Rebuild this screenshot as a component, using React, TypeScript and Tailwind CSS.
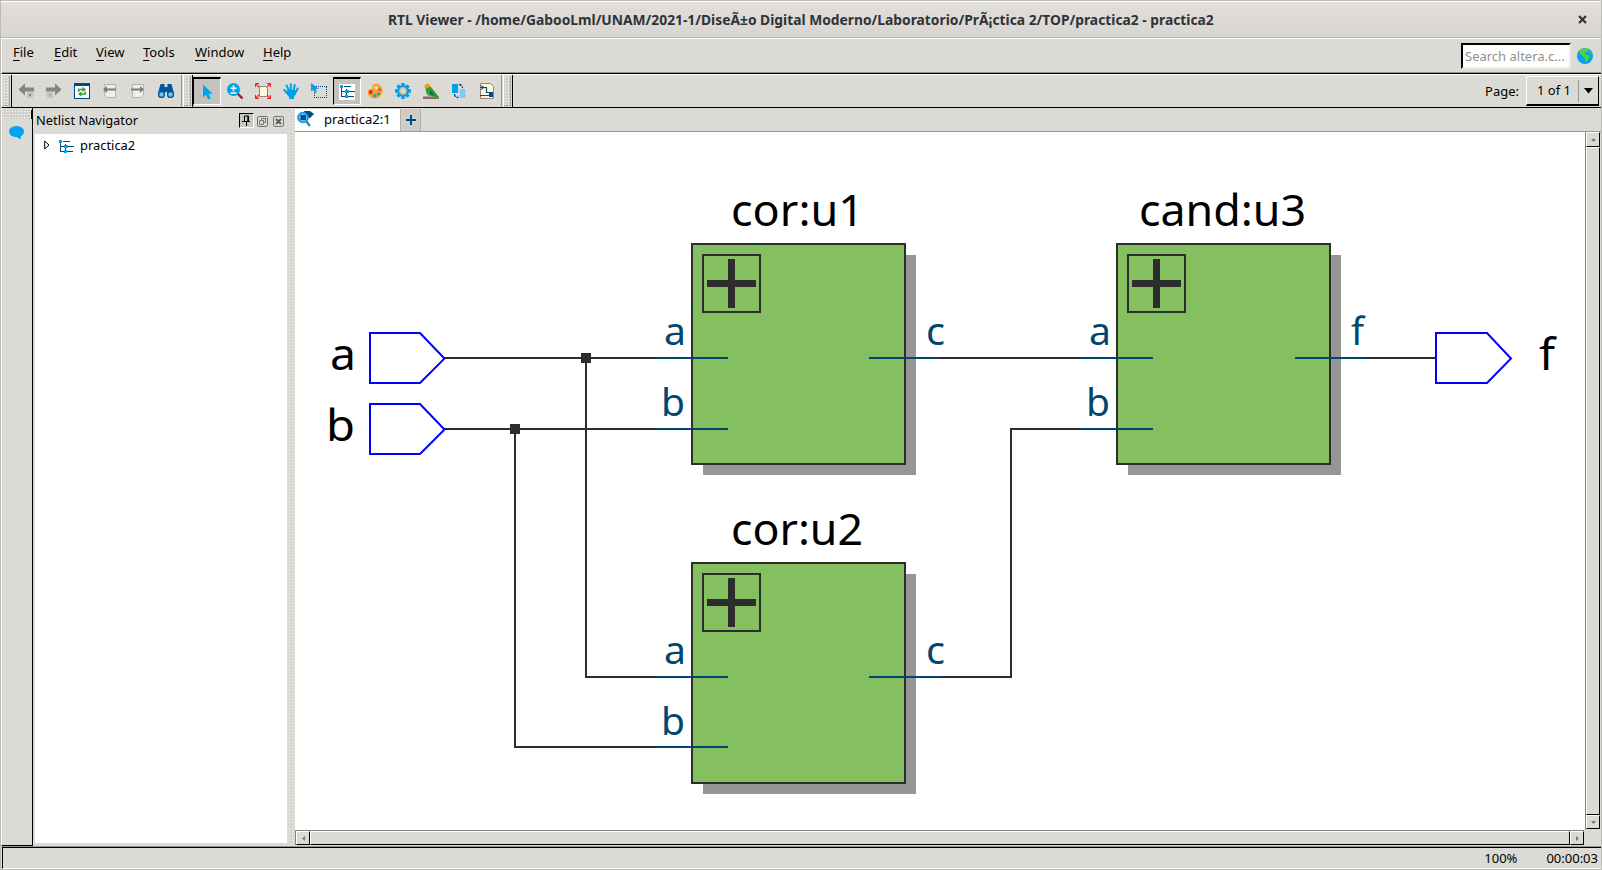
import React from "react";

const dots =
  "bg-[#d2d1cc] bg-[radial-gradient(#ffffff_0.9px,transparent_1px)] bg-[length:3px_3px]";

function Handle() {
  return (
    <div className="flex w-[9px] shrink-0 border-r border-black py-[1px]">
      <div className={`w-[7px] border-r border-b border-[#a9a8a3] ${dots}`} />
    </div>
  );
}

function ToolButton({ active, children }: { active?: boolean; children: React.ReactNode }) {
  return (
    <div
      className={
        active
          ? "flex h-7 w-7 items-center justify-center border border-t-2 border-l-black border-t-black border-r-white border-b-white bg-[#c4c2bd]"
          : "flex h-7 w-7 items-center justify-center"
      }
    >
      {children}
    </div>
  );
}

function Svg({ children, w = 16, h = 16 }: { children: React.ReactNode; w?: number; h?: number }) {
  return (
    <svg width={w} height={h} viewBox={`0 0 ${w} ${h}`} className="shrink-0">
      {children}
    </svg>
  );
}

const Back = () => (
  <Svg>
    <path d="M0.500 6.500 7 0.500v4H16v4h-9v4Z" fill="#868582" />
    <path d="M9 9h6v6H9z" fill="#c4c3be" />
    <path d="M11 11h2v2h-2z" fill="#868582" />
  </Svg>
);
const Forward = () => (
  <Svg>
    <path d="M15.500 6.500 9 0.500v4H0v4h9v4Z" fill="#868582" />
    <path d="M1 9h6v6H1z" fill="#c4c3be" />
    <path d="M3 11h2v2H3z" fill="#a9a8a4" />
  </Svg>
);
const Refresh = () => (
  <Svg>
    <path d="M0 0h16v16H0z" fill="#004a86" />
    <path d="M1 3h14v12H1z" fill="#fff" />
    <g fill="none" stroke="#3c9a2e" strokeWidth="1.500">
      <path d="M4.700 9V6.500H9M11.300 8.500V11H7" />
    </g>
    <path d="M8.500 3.700 12 6.500 8.500 9ZM7.500 8.500 4 11 7.500 13.800Z" fill="#3c9a2e" />
  </Svg>
);
const PagePrev = () => (
  <Svg>
    <path d="M3 1.500h10.500v13H5L2.500 12V1.500z" fill="#efeeea" stroke="#b4b3ae" />
    <path d="M1 6.500 5 3v2.500h9v2H5V10Z" fill="#7c7b78" />
  </Svg>
);
const PageNext = () => (
  <Svg>
    <path d="M2.500 1.500h11v10.500l-2.500 2.500H2.500z" fill="#efeeea" stroke="#b4b3ae" />
    <path d="M14 6.500 10 3v2.500H1v2h9V10Z" fill="#7c7b78" />
  </Svg>
);
const Binoculars = () => (
  <Svg>
    <path
      d="M2.500 1h4v3h3V1h4l2.500 9v3.500L14 15h-3.500L9 13V9H7v4l-1.500 2H2L0 13.500V10Z"
      fill="#005a9c"
    />
    <circle cx="3.500" cy="11.500" r="2.200" fill="#6fc6f2" />
    <circle cx="12.500" cy="11.500" r="2.200" fill="#6fc6f2" />
  </Svg>
);
const Pointer = () => (
  <Svg>
    <path d="M4 0.500v13l3-2.700 2.200 4.700 2.600-1.200-2.200-4.500h4Z" fill="#00a4f0" />
  </Svg>
);
const ZoomIcon = () => (
  <Svg>
    <path d="m10.500 10.500 5 5" stroke="#b01c1c" strokeWidth="2.400" />
    <circle cx="6.500" cy="6.500" r="6.500" fill="#00a0ea" />
    <path d="M3.500 5.200h6M6.500 2.200v6M3.500 10h6" stroke="#fff" strokeWidth="1.400" />
  </Svg>
);
const Fit = () => (
  <Svg>
    <path d="M4.500 3.500h6L12.500 5.500v8h-8z" fill="#fffadf" stroke="#9c8275" />
    <g stroke="#ee1c25" fill="none">
      <path d="m1 1 3 3M15 1l-3 3M1 15l3-3M15 15l-3-3" strokeWidth="1.200" />
      <path d="M.5 4V.5H4M12 .5h3.500V4M.5 12v3.500H4M12 15.500h3.500V12" />
    </g>
  </Svg>
);
const Hand = () => (
  <Svg>
    <g stroke="#00a0ea" strokeLinecap="round" fill="none" strokeWidth="2">
      <path d="M1.300 7 5 11M3.700 2.500 6 8M7.800 1.200V8M11.700 2 10.500 8M14.700 5.500 12 10.500" />
    </g>
    <path d="M4.500 7h8l.5 4-2 3v2H6v-2L3 10Z" fill="#00a0ea" />
  </Svg>
);
const AreaSelect = () => (
  <Svg>
    <path
      d="M3 3.500h13M3 14.500h13M3.500 4v11M15.500 4v11"
      fill="none"
      stroke="#004a86"
      strokeDasharray="1 1"
      shapeRendering="crispEdges"
    />
    <path d="M0 0v8.500l2-1.500 2 3 2-1-1.500-3H8Z" fill="#00a0ea" />
  </Svg>
);
const Tree = () => (
  <Svg>
    <path
      d="M2.500 3v10M2 7.500h4M2 12.500h4M5 2.500h7M9 7.500h7M9 12.500h6M7.500 5v6"
      fill="none"
      stroke="#004a86"
      shapeRendering="crispEdges"
    />
    <path d="M1 1h3v3H1zM6 6h4v3H6zM6 11h3v3H6z" fill="#00a0ea" />
  </Svg>
);
const Palette = () => (
  <Svg>
    <path
      fillRule="evenodd"
      d="M9 .8c4 0 6.500 3 6.500 6.600 0 4.500-3.500 8.100-7.500 8.100S.8 13 .8 9.500C.8 7 2 6 4 6c1.500 0 1.500-1 1.300-2C5 2 6.500.8 9 .8Zm0 2.200c-1.500 0-2 1-1.500 2.200C8 6.500 9 7 10 6.500c1.400-.7.700-3.500-1-3.500Z"
      fill="#ffa21e"
    />
    <circle cx="3.800" cy="9" r="1.900" fill="#ed1650" />
    <circle cx="7.800" cy="12.600" r="1.900" fill="#1aa7e8" />
    <circle cx="11.500" cy="10.800" r="1.600" fill="#3aa44a" />
    <circle cx="12.600" cy="6.800" r="1.300" fill="#96509f" />
  </Svg>
);
const Gear = () => (
  <Svg>
    <path
      d="M8 0v16M0 8h16M2.400 2.400l11.200 11.200M13.600 2.400 2.400 13.600"
      stroke="#009fe8"
      strokeWidth="3.400"
    />
    <circle cx="8" cy="8" r="6" fill="#009fe8" />
    <circle cx="8" cy="8" r="3.300" fill="#dcdad5" stroke="#c9ad82" strokeWidth="1.300" />
  </Svg>
);
const Bird = () => (
  <Svg>
    <path d="M0 13.500h16V16H0z" fill="#8d6c60" />
    <path d="M1 3 4.500 0 8 3l-.5 4H3Z" fill="#f79a1f" />
    <path d="M3 5 8 4l8 10h-4l-7-1.500Q2 9 3 5Z" fill="#2f9e3e" />
    <path d="M7 6.500 12 13 7 11Z" fill="#136b2c" />
  </Svg>
);
const Swap = () => (
  <Svg>
    <path d="M1 1h6v9H1z" fill="#00a0ea" />
    <path d="M9 6h5v9H9zM8 8h7v1.300H8zM8 12h7v1.300H8z" fill="#7ccdf5" />
    <path
      d="M8 1.500q3 0 3.500 3.500M3.500 11q0 3.500 4 3.500"
      fill="none"
      stroke="#004a86"
      strokeDasharray="3 1"
      strokeWidth="1.400"
    />
  </Svg>
);
const Schematic = () => (
  <Svg>
    <path d="M1.500.5h10l3 3v12h-13z" fill="#fff8dc" stroke="#9c8275" />
    <path d="M1 4.500h6.500v5H12M1 12.500h10" fill="none" stroke="#004a86" strokeWidth="1.200" />
    <path d="M2 2.500l3 2-3 2" fill="none" stroke="#004a86" />
    <path d="M10 9h4v5h-4z" fill="#004a86" />
  </Svg>
);

function Globe() {
  return (
    <Svg>
      <circle cx="8" cy="8" r="8" fill="#00a4f2" />
      <path d="M3 2.500Q6 0 10 .500l2 1.500-2 2-2 .5L7.500 6l4 1.500 1 2-3 4-1 1.500-.5-5L5 7.500 2.500 5Z" fill="#62d222" />
      <path d="M12 3 14 4.500l.5 2-2-1Z" fill="#62d222" />
    </Svg>
  );
}

function TabIcon() {
  return (
    <Svg w={17} h={17}>
      <path d="M7 1h6l4 3-4 4H9Z" fill="#004a86" />
      <path d="m9 11 4 5" stroke="#1a86c8" strokeWidth="2.200" />
      <circle cx="6" cy="7.500" r="5" fill="#64bfee" stroke="#1395dc" strokeWidth="1.600" />
      <path d="M3.500 5h5.500v5H3.500z" fill="#004a86" />
    </Svg>
  );
}

function MenuItem({ label, className }: { label: string; className: string }) {
  return (
    <span className={className}>
      <span className="underline decoration-1 underline-offset-[3px]">{label[0]}</span>
      {label.slice(1)}
    </span>
  );
}

function Label({
  x,
  y,
  w,
  size,
  fill,
  children,
}: {
  x: number;
  y: number;
  w: number;
  size: number;
  fill: string;
  children: string;
}) {
  return (
    <text x={x} y={y + 1} textLength={w} lengthAdjust="spacingAndGlyphs" fontSize={size} fill={fill}>
      {children}
    </text>
  );
}

function Block({ dx = 0, dy = 0 }: { dx?: number; dy?: number }) {
  return (
    <g transform={`translate(${dx} ${dy})`}>
      <path d="M703 255h213v220H703z" fill="#969696" />
      <path d="M692 244h213v220H692z" fill="#84c060" stroke="#2d2d2d" strokeWidth="2" />
      <path d="M703 255h57v57h-57z" fill="none" stroke="#2d2d2d" strokeWidth="2" />
      <path d="M707 280h49v7h-49zM728 259h7v49h-7z" fill="#2d2d2d" />
    </g>
  );
}

function Netlist() {
  const pin = "#00466e";
  return (
    <svg
      width="1290"
      height="698"
      viewBox="295 132 1290 698"
      className="block shrink-0 bg-white"
      fontFamily="'Noto Sans', sans-serif"
    >
      <Block />
      <Block dx={425} />
      <Block dy={319} />
      <g fill="none" stroke="#2d2d2d" strokeWidth="2">
        <path d="M444 358H658M444 429H658M586 358V677H658M515 429V747H658M939 358H1083M939 677H1011V429H1083M1364 358H1436" />
      </g>
      <path d="M581 353h10v10h-10zM510 424h10v10h-10z" fill="#2d2d2d" />
      <g stroke={pin} strokeWidth="2">
        <path d="M657 358h71M657 429h71M869 358h71M657 677h71M657 747h71M869 677h71M1082 358h71M1082 429h71M1295 358h70" />
      </g>
      <g fill="none" stroke="#0000ff" strokeWidth="2">
        <path d="M370 333h50l24.500 25.500L420 383h-50zM370 404h50l24.500 25.500L420 454h-50zM1436 333h51l24 25.500L1487 383h-51z" />
      </g>
      <Label x={731} y={225} w={133} size={44.500} fill="#000">cor:u1</Label>
      <Label x={731} y={544} w={132} size={44.500} fill="#000">cor:u2</Label>
      <Label x={1139} y={225} w={167} size={44.500} fill="#000">cand:u3</Label>
      <Label x={330} y={369} w={26} size={44.500} fill="#000">a</Label>
      <Label x={326} y={440} w={29} size={44.500} fill="#000">b</Label>
      <Label x={1539} y={369} w={16} size={44.500} fill="#000">f</Label>
      {[[0, 0, 0], [425, 0, 0], [0, 319, 319]].map(([dx, dy, dyb]) => (
        <React.Fragment key={`${dx}-${dy}`}>
          <Label x={664 + dx} y={344 + dy} w={22} size={38} fill={pin}>a</Label>
          <Label x={661 + dx} y={415 + dyb} w={24} size={38} fill={pin}>b</Label>
        </React.Fragment>
      ))}
      <Label x={926} y={344} w={19} size={38} fill={pin}>c</Label>
      <Label x={926} y={663} w={19} size={38} fill={pin}>c</Label>
      <Label x={1351} y={344} w={13} size={38} fill={pin}>f</Label>
    </svg>
  );
}

const bevel = "border border-t-white border-l-white border-r-black border-b-black bg-[#dcdad5]";

export default function App() {
  return (
    <div className="flex h-[870px] w-[1602px] flex-col overflow-hidden border border-[#bcbbb8] bg-[#dcdad5] font-['Noto_Sans',sans-serif] text-[13px] text-black">
      <header className="flex h-[37px] shrink-0 items-center border-t border-b border-t-white border-b-[#b6b3ae] bg-linear-to-b from-[#e1dedb] to-[#d9d5d1] pr-[14px] pl-[387px]">
        <h1 className="w-[827px] pt-[2px] text-[13.820px] font-bold whitespace-nowrap text-[#2e3436]">
          RTL Viewer - /home/GabooLml/UNAM/2021-1/DiseÃ±o Digital Moderno/Laboratorio/PrÃ¡ctica 2/TOP/practica2 - practica2
        </h1>
        <svg width="9" height="9" viewBox="0 0 9 9" className="ml-auto">
          <path d="m1 1 7 7M8 1 1 8" stroke="#2e3436" strokeWidth="2.200" />
        </svg>
      </header>

      <nav className="flex h-[36px] shrink-0 border-t border-b border-l border-t-white border-l-white border-b-black pt-[4px] pr-[8px] pl-[11px] shadow-[inset_0_-1px_0_#96948f]">
        <MenuItem label="File" className="w-[41px]" />
        <MenuItem label="Edit" className="w-[42px]" />
        <MenuItem label="View" className="w-[47px]" />
        <MenuItem label="Tools" className="w-[52px]" />
        <MenuItem label="Window" className="w-[68px]" />
        <MenuItem label="Help" className="" />
        <div className="mt-0 ml-auto flex h-[26px] w-[110px] items-center border-2 border-t-black border-r-[#eceae6] border-b-[#eceae6] border-l-black bg-white pt-px pl-[2px] whitespace-nowrap text-[#8f8f8f]">
          Search altera.c...
        </div>
        <div className="mt-[5px] ml-[6px]">
          <Globe />
        </div>
      </nav>

      <div className="flex h-[34px] shrink-0 border-t border-b border-l border-t-white border-b-black border-l-white pl-px">
        <Handle />
        <div className="flex w-[170px] items-center border-r border-[#96948f]">
          <ToolButton><Back /></ToolButton>
          <ToolButton><Forward /></ToolButton>
          <ToolButton><Refresh /></ToolButton>
          <ToolButton><PagePrev /></ToolButton>
          <ToolButton><PageNext /></ToolButton>
          <ToolButton><Binoculars /></ToolButton>
        </div>
        <div className="w-[2px] border-r border-white" />
        <Handle />
        <div className="flex w-[309px] items-center border-r border-[#96948f]">
          <ToolButton active><Pointer /></ToolButton>
          <ToolButton><ZoomIcon /></ToolButton>
          <ToolButton><Fit /></ToolButton>
          <ToolButton><Hand /></ToolButton>
          <ToolButton><AreaSelect /></ToolButton>
          <ToolButton active>
            <span className="bg-white"><Tree /></span>
          </ToolButton>
          <ToolButton><Palette /></ToolButton>
          <ToolButton><Gear /></ToolButton>
          <ToolButton><Bird /></ToolButton>
          <ToolButton><Swap /></ToolButton>
          <ToolButton><Schematic /></ToolButton>
        </div>
        <div className="w-[2px] border-r border-white" />
        <Handle />
        <span className="mr-[7px] ml-auto self-center pt-px">Page:</span>
        <div className={`mt-px mr-[2px] flex h-[30px] w-[73px] items-center pl-[10px] ${bevel} border-b-2`}>
          <span className="w-[41px] pt-px whitespace-nowrap">1 of 1</span>
          <div className="flex h-[22px] flex-1 items-center justify-center border-l border-[#96948f]">
            <svg width="9" height="6" viewBox="0 0 9 6"><path d="M0 0h9L4.500 5.500Z" /></svg>
          </div>
        </div>
      </div>

      <div className="flex h-[738px] shrink-0">
        <aside className="flex w-[32px] shrink-0 flex-col border-r border-b border-l border-l-white border-r-black border-b-black">
          <div className={`mt-[2px] h-[9px] border-r border-black ${dots}`} />
          <svg width="16" height="14" viewBox="0 0 16 14" className="mt-[7px] ml-[7px]">
            <ellipse cx="7.500" cy="5.500" rx="7.500" ry="5.500" fill="#00a4f2" />
            <path d="M6 10h6l-.5 3.500Z" fill="#00a4f2" />
          </svg>
        </aside>

        <section className="flex w-[256px] shrink-0 flex-col pr-[2px] pb-[3px] pl-[2px]">
          <div className="flex h-[26px] shrink-0 items-center pr-[3px] pl-[1px]">
            <span className="flex-1 text-[12.850px]">Netlist Navigator</span>
            <div className="mt-[-2px] mr-[3px] flex h-[15px] w-[15px] items-center justify-center border border-t-black border-r-white border-b-white border-l-black bg-[#c9c7c2]">
              <svg width="9" height="11" viewBox="0 0 9 11">
                <path d="M2.500 1h4v5.500M2.500 1v5.500M0 6.500h8M4.500 7v4M5.800 1v5" fill="none" stroke="#000" />
              </svg>
            </div>
            <svg width="11" height="11" viewBox="0 0 11 11" className="mr-[5px]">
              <rect x=".5" y=".5" width="10" height="10" rx="1.500" fill="none" stroke="#777570" />
              <path d="M4.500 4V2.500h4v4H7M2.500 4.500h4v4h-4z" fill="none" stroke="#777570" />
            </svg>
            <svg width="11" height="11" viewBox="0 0 11 11">
              <rect x=".5" y=".5" width="10" height="10" rx="1.500" fill="none" stroke="#777570" />
              <path d="m3 3 5 5M8 3 3 8" stroke="#5c5a56" strokeWidth="1.800" />
            </svg>
          </div>
          <div className="flex flex-1 items-start bg-white pt-[2px] pl-[9px]">
            <svg width="6" height="10" viewBox="0 0 6 10" className="mt-[4px]">
              <path d="M.7 1v8L5 5Z" fill="#fff" stroke="#000" />
            </svg>
            <div className="mt-[2px] mr-[6px] ml-[8px] pt-px">
              <Tree />
            </div>
            <span className="text-[12.900px]">practica2</span>
          </div>
        </section>

        <div className="flex w-[6px] shrink-0">
          <div className={`mt-[2px] mb-[3px] ml-[2px] w-[2px] ${dots}`} />
        </div>

        <main className="flex min-w-0 flex-1 flex-col">
          <div className="flex h-[24px] shrink-0 border-b border-[#9b9994]">
            <div className="mt-px flex w-[105px] items-start gap-[10px] bg-white pt-px pl-[2px]">
              <TabIcon />
              <span>practica2:1</span>
            </div>
            <div className="mt-px flex w-[21px] items-center justify-center border-r border-l border-[#b2b0ab] bg-[#cfcdc8]">
              <svg width="10" height="10" viewBox="0 0 10 10" className="mb-px">
                <path d="M5 0v10M0 5h10" stroke="#004a86" strokeWidth="2" />
              </svg>
            </div>
          </div>
          <div className="flex h-[698px] shrink-0">
            <Netlist />
            <div className="flex w-[15px] flex-col border-l border-[#85837e]">
              <div className={`flex h-[15px] items-center justify-center ${bevel}`}>
                <svg width="5" height="3" viewBox="0 0 5 3"><path d="M0 3h5L2.500 0Z" fill="#777" /></svg>
              </div>
              <div className={`flex-1 ${bevel}`} />
              <div className={`mb-px flex h-[14px] items-center justify-center ${bevel}`}>
                <svg width="5" height="3" viewBox="0 0 5 3"><path d="M0 0h5L2.500 3Z" fill="#777" /></svg>
              </div>
            </div>
          </div>
          <div className="flex h-[15px] w-[1289px] shrink-0 border-t border-l border-[#85837e]">
            <div className={`flex w-[14px] items-center justify-center ${bevel}`}>
              <svg width="3" height="5" viewBox="0 0 3 5"><path d="M3 0v5L0 2.500Z" fill="#777" /></svg>
            </div>
            <div className={`flex-1 ${bevel}`} />
            <div className={`flex w-[14px] items-center justify-center ${bevel}`}>
              <svg width="3" height="5" viewBox="0 0 3 5"><path d="M0 0v5l3-2.500Z" fill="#777" /></svg>
            </div>
          </div>
        </main>
      </div>

      <footer className="mt-px ml-px flex h-[22px] shrink-0 items-center justify-end gap-[29px] border-t border-b border-l border-t-black border-b-white border-l-black pt-[2px] pr-[3px] shadow-[0_-1px_0_#96948f]">
        <span>100%</span>
        <span>00:00:03</span>
      </footer>
    </div>
  );
}
